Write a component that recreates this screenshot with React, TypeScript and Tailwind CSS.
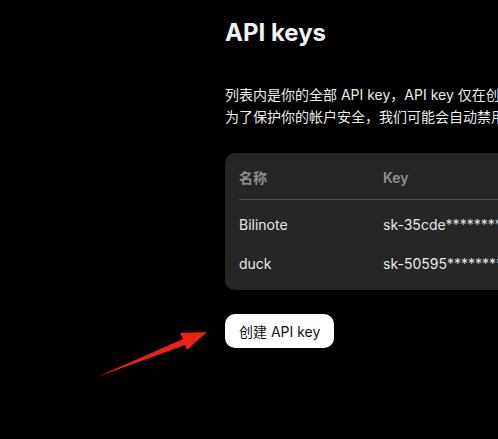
// API keys settings page — dark theme
const FONT = 'font-["Inter","Noto_Sans_CJK_SC",sans-serif]'

const KEYS = [
  { name: 'Bilinote', key: 'sk-35cde************************' },
  { name: 'duck', key: 'sk-50595************************' },
]

function Arrow() {
  // red annotation arrow pointing at the create button
  return (
    <svg className="absolute left-0 top-0" width="498" height="439" viewBox="0 0 498 439">
      <polygon
        points="97,377 183,339 180,333 207,332 187,350 185,345"
        fill="#f21f14"
      />
    </svg>
  )
}

export default function App() {
  return (
    <div className={`relative h-[439px] w-[498px] overflow-hidden bg-black ${FONT}`}>
      <div className="w-[800px] pl-[225px] pt-[17px]">
        <h1 className="text-[24px] leading-8 font-bold text-[#f2f2f2]">API keys</h1>

        <div className="mt-[35px] text-[14px] leading-[22px] text-[#ececec] whitespace-nowrap">
          <p>列表内是你的全部 API key，API key 仅在创建时可见可复制，请妥善保存。</p>
          <p>为了保护你的帐户安全，我们可能会自动禁用我们发现已公开泄露的 API key。</p>
        </div>

        <div className="mt-[25px] w-[520px] rounded-[10px] bg-[#262626] px-[14px] pb-[7px]">
          <div className="flex h-[47px] items-center border-b border-[#4f4f4f] pt-[3px] text-[14px] font-semibold text-[#8f8f8f]">
            <span className="w-[144px]">名称</span>
            <span>Key</span>
          </div>
          <div className="pt-[5px]">
            {KEYS.map((k) => (
              <div key={k.name} className="flex h-[39px] items-center text-[14px] text-[#e6e6e6]">
                <span className="w-[144px]">{k.name}</span>
                <span>{k.key}</span>
              </div>
            ))}
          </div>
        </div>

        <button className="mt-[24px] flex h-[34px] items-center rounded-[10px] bg-white px-[14px] text-[14px] text-[#111]">
          创建 API key
        </button>
      </div>
      <Arrow />
    </div>
  )
}
